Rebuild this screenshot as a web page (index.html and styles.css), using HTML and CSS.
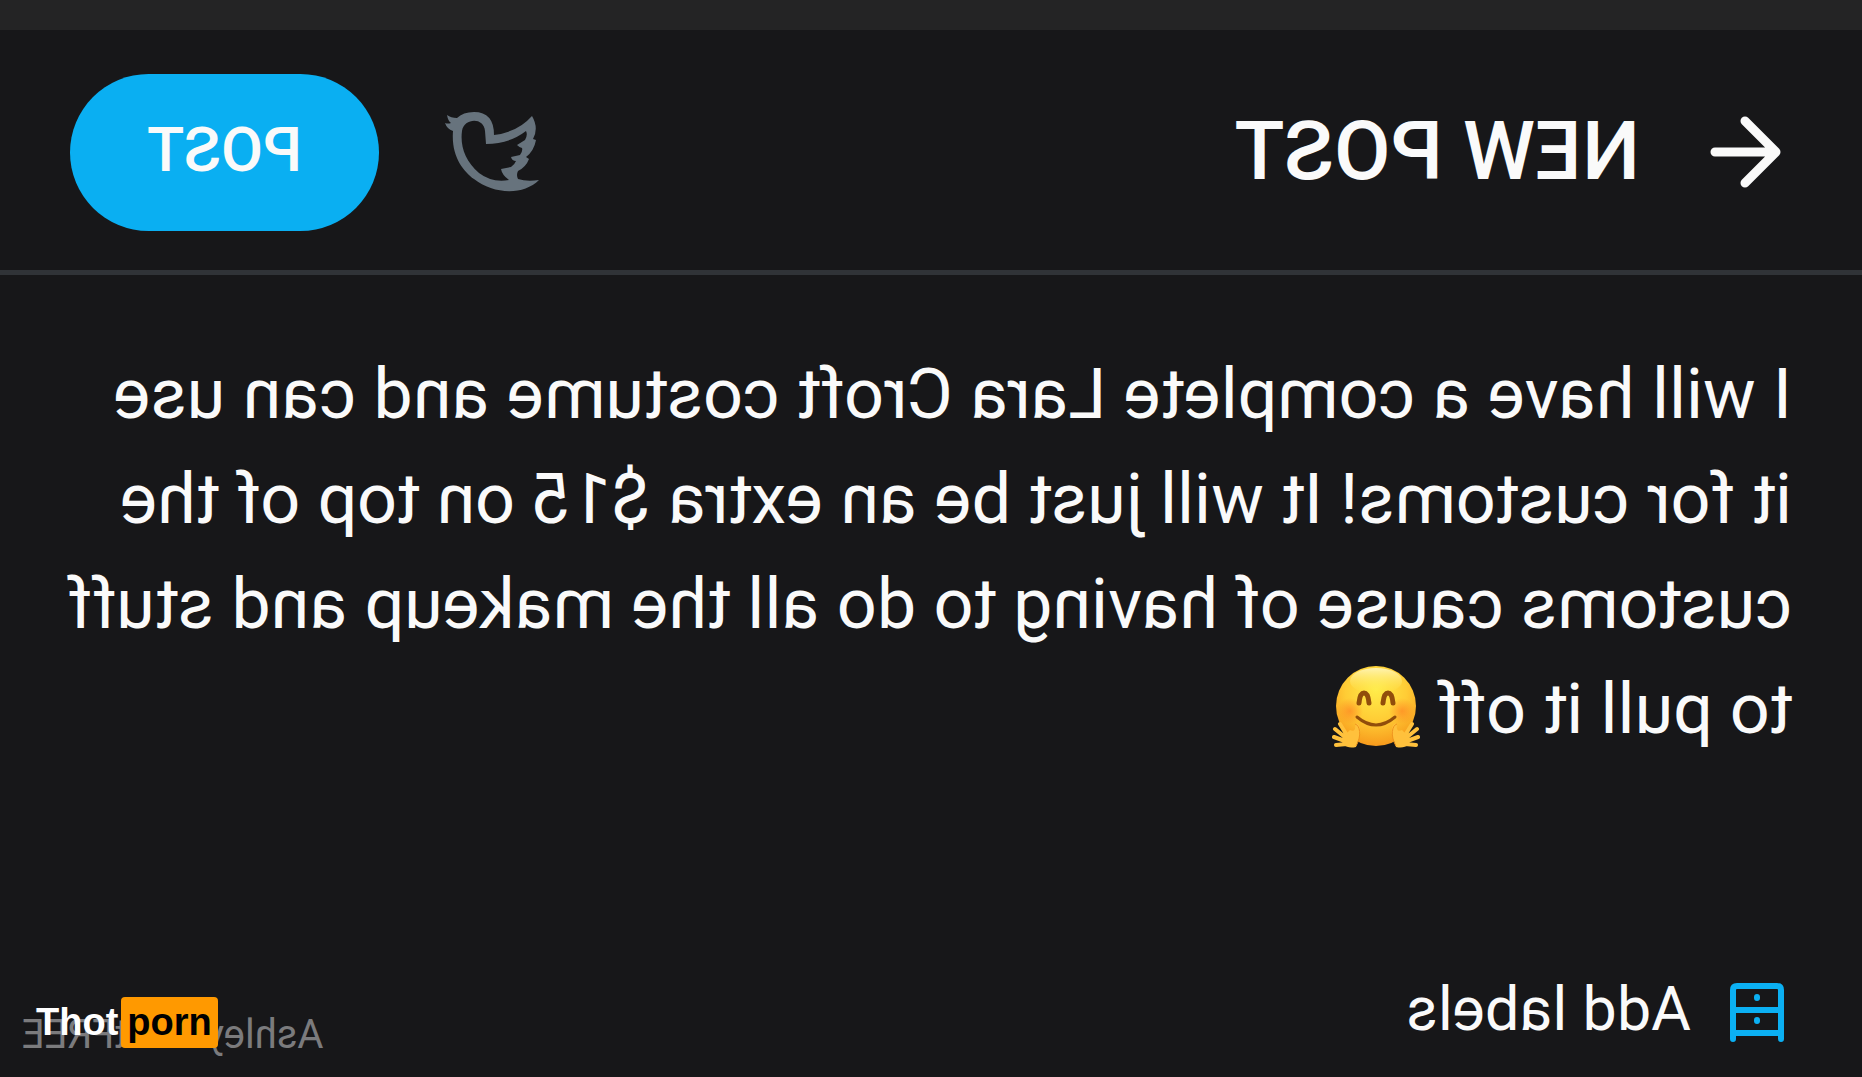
FILE: index.html
```html
<!DOCTYPE html>
<html lang="en">
<head>
<meta charset="utf-8">
<title>New post</title>
<link rel="stylesheet" href="styles.css">
</head>
<body>
<div class="screen">
  <div class="status"></div>
  <header class="header">
    <button class="icon-button" type="button" aria-label="Back">
      <svg width="72" height="72" viewBox="0 0 72 72" fill="none" stroke="#fafafa" stroke-width="9" stroke-linecap="round" stroke-linejoin="round"><path d="M67 36H6M37 5L6 36L37 67"/></svg>
    </button>
    <h1 class="title">NEW POST</h1>
    <button class="icon-button" type="button" aria-label="Share to Twitter">
      <svg width="96" height="80" viewBox="0 0 96 80"><path fill="#67737d" fill-rule="evenodd" d="M0 68Q12 70 21 67Q23 63 21 59Q13 55 10 47L13 45Q5 39 3 28L6 27Q0 16 7 4Q21 20 45 23Q45 0 65 0Q76 0 82 6Q88 6 92 3Q91 9 88 11Q91 12 94 11Q92 17 86 19C88 44 76 59 65 67C46 82 16 84 0 68ZM13 19Q11 23 14 28L22 33Q19 36 17 36Q16 39 19 43L28 45Q27 49 23 49Q24 52 28 55L38 57Q37 63 30 68Q47 71 60 61C74 49 79 34 77 19C75 6 55 5 54 19L53 32Q30 32 13 19Z"/></svg>
    </button>
    <button class="post" type="button">POST</button>
  </header>
  <main class="compose">
    <p class="message">I will have a complete Lara Croft costume and can use it for customs! It will just be an extra $15 on top of the customs cause of having to do all the makeup and stuff to pull it off
      <svg class="emoji" viewBox="0 0 88 84" role="img" aria-label="Hugging face">
        <defs>
          <radialGradient id="face" cx="50%" cy="30%" r="70%"><stop offset="0" stop-color="#ffec4a"/><stop offset=".55" stop-color="#ffcc35"/><stop offset="1" stop-color="#f79a1c"/></radialGradient>
          <radialGradient id="cheek"><stop offset="0" stop-color="#ff7a20" stop-opacity=".6"/><stop offset="1" stop-color="#ff7a20" stop-opacity="0"/></radialGradient>
          <linearGradient id="shine" x2="0" y2="1"><stop offset="0" stop-color="#fffbd0"/><stop offset="1" stop-color="#ffec4a" stop-opacity="0"/></linearGradient>
        </defs>
        <circle cx="44" cy="41" r="40" fill="url(#face)"/>
        <ellipse cx="44" cy="16" rx="26" ry="13" fill="url(#shine)" opacity=".8"/>
        <circle cx="18" cy="46" r="13" fill="url(#cheek)"/><circle cx="70" cy="46" r="13" fill="url(#cheek)"/>
        <path d="M27 38Q28 28 32 28T37 38M51 38Q52 28 56 28T61 38" fill="none" stroke="#914d0b" stroke-width="5" stroke-linecap="round"/>
        <path d="M25 52Q44 68 63 52" fill="none" stroke="#914d0b" stroke-width="3" stroke-linecap="round"/>
        <g id="hand"><path d="M24 82C15 84 8 80 11 72L18 65C22 67 24 65 23 59C27 57 29 63 28 70Z" fill="#ffc13c"/><path d="M16 72L8 59M14 73L3 64M13 76L2 72M15 79L4 80" stroke="#ffc13c" stroke-width="4" stroke-linecap="round"/><path d="M23 59C28 60 30 71 24 81" fill="none" stroke="#ef941d" stroke-width="1"/></g>
        <use href="#hand" transform="matrix(-1 0 0 1 88 0)"/>
      </svg></p>
  </main>
  <footer class="footer">
    <button class="labels" type="button">
      <svg width="54" height="60" viewBox="0 0 54 60" fill="none" stroke="#0bb0f3" stroke-width="6" stroke-linecap="round"><path d="M3 56V7Q3 3 7 3H47Q51 3 51 7V56M3 27H51M3 50H51"/><path d="M27 14V15M27 37V38"/></svg>
      <span class="labels-text">Add labels</span>
    </button>
    <span class="author">AshleyRositFREE</span>
  </footer>
</div>
<div class="watermark"><span>Thot</span><span class="tag">porn</span></div>
</body>
</html>
```
FILE: styles.css
```css
* { box-sizing: border-box; }
body {
  margin: 0;
  background: #171719;
  color: #fafafa;
  font-family: Roboto, sans-serif;
}
button {
  padding: 0;
  border: 0;
  background: none;
  color: inherit;
  font: inherit;
}
svg { display: block; }
.screen {
  display: flex;
  flex-direction: column;
  min-height: 100vh;
  transform: scaleX(-1);
}
.status { height: 30px; background: #242425; }
.header {
  display: flex;
  align-items: center;
  height: 245px;
  padding: 4px 70px 0 80px;
  border-bottom: 5px solid #303337;
}
.title {
  flex: 1;
  margin: 0;
  padding: 0 0 2px 70px;
  font-size: 82px;
  font-weight: 500;
  line-height: 96px;
}
.post {
  width: 309px;
  height: 157px;
  margin-left: 64px;
  padding-bottom: 4px;
  border-radius: 79px;
  background: #0aaff2;
  font-size: 61px;
  font-weight: 500;
}
.compose { flex: 1; padding: 67px 66px 0 70px; }
.message {
  margin: 0;
  font-size: 70px;
  line-height: 105px;
}
.emoji {
  display: inline-block;
  width: 88px;
  height: 84px;
  vertical-align: -16px;
}
.footer {
  display: flex;
  justify-content: space-between;
  align-items: flex-end;
  padding: 0 22px 20px 78px;
}
.labels {
  display: flex;
  align-items: center;
  gap: 39px;
  padding-bottom: 4px;
  font-size: 61px;
  line-height: 72px;
}
.labels-text { padding-bottom: 8px; }
.author { color: #7b7b7d; font-size: 40px; line-height: 44px; }
.watermark {
  position: absolute;
  left: 36px;
  bottom: 29px;
  display: flex;
  gap: 3px;
  font: bold 38px/51px "Liberation Sans", sans-serif;
  color: #fff;
}
.tag { padding: 0 6px; border-radius: 4px; background: #f90; color: #000; }
```
